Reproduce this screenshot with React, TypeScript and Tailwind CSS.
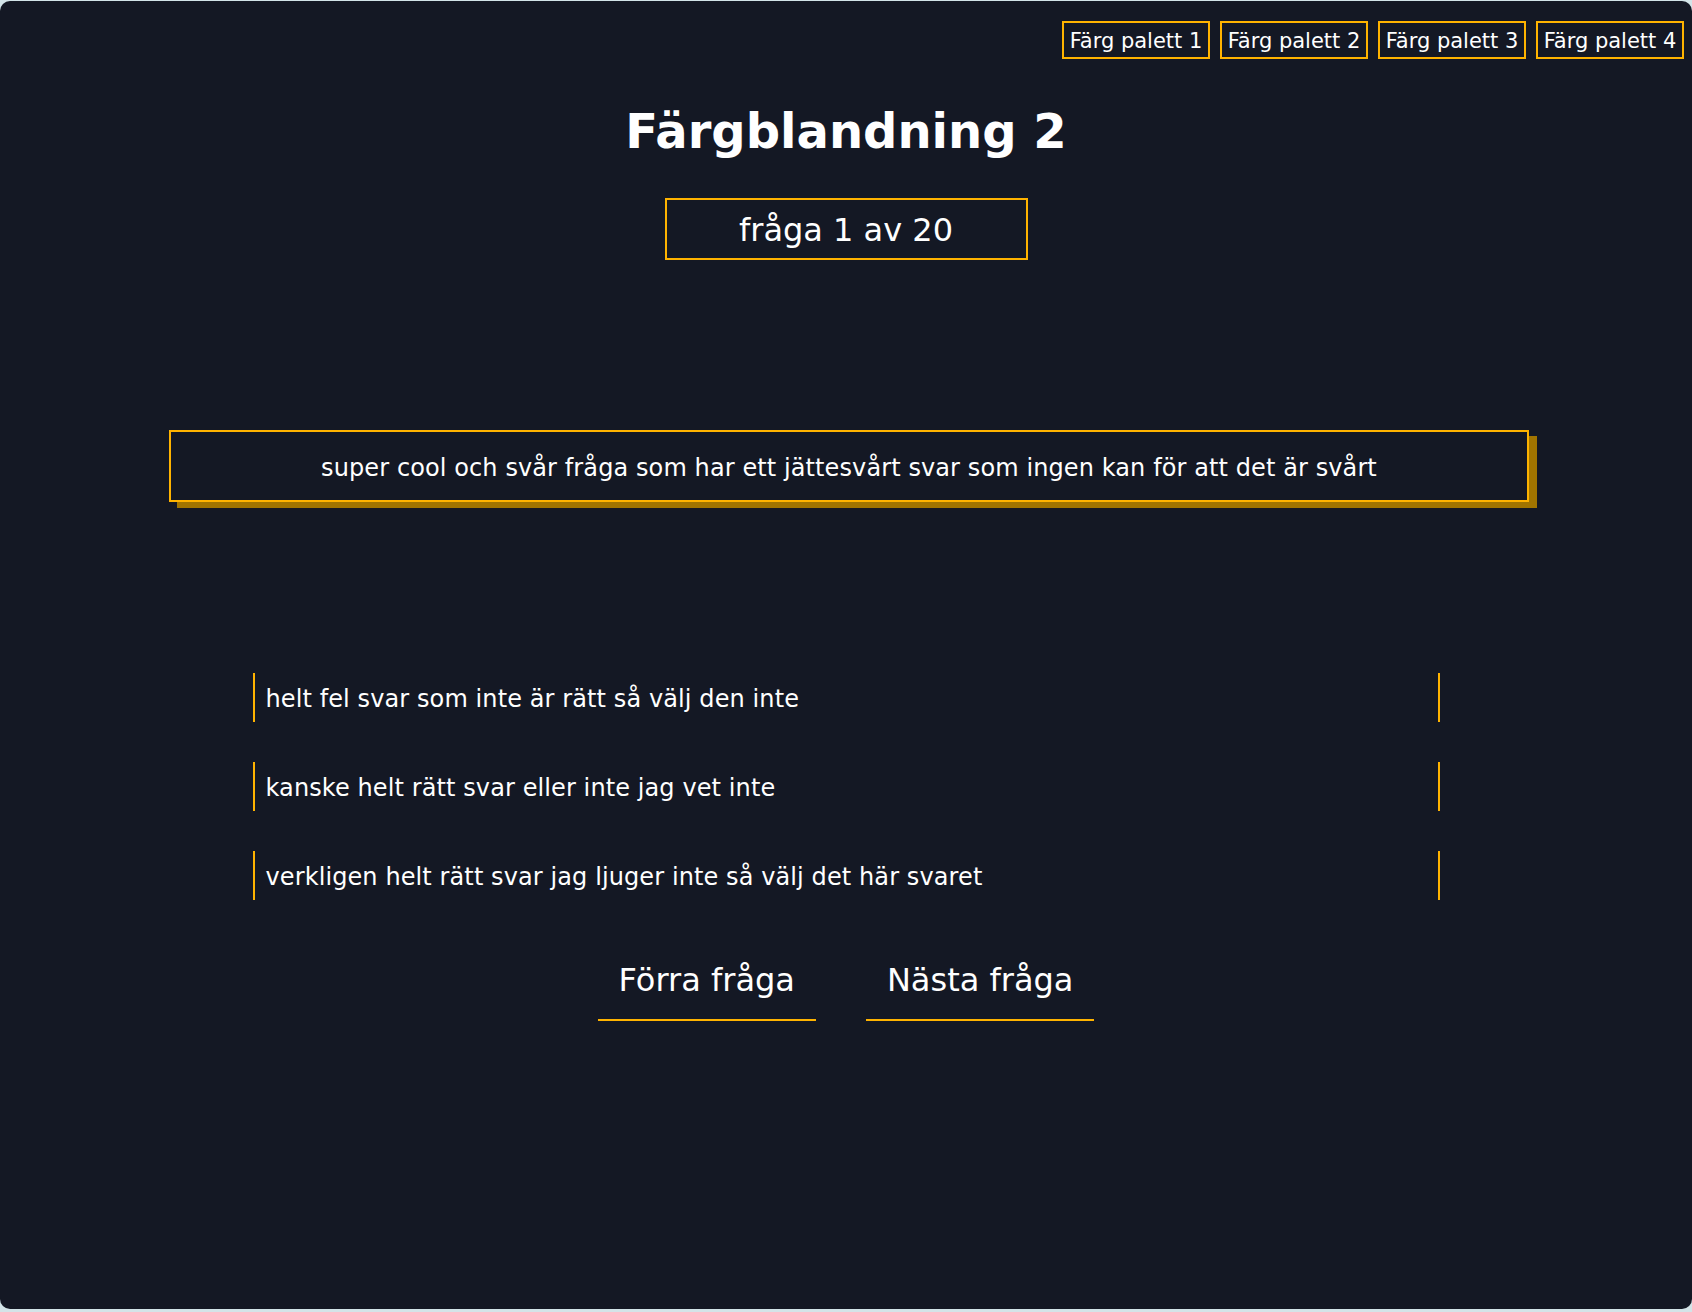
import { useState } from "react";

const palettes = ["Färg palett 1", "Färg palett 2", "Färg palett 3", "Färg palett 4"];

const answers = [
  "helt fel svar som inte är rätt så välj den inte",
  "kanske helt rätt svar eller inte jag vet inte",
  "verkligen helt rätt svar jag ljuger inte så välj det här svaret",
];

const App: React.FC = () => {
  const [palette, setPalette] = useState(0);
  const [selected, setSelected] = useState<number | null>(null);
  const [question, setQuestion] = useState(1);
  const total = 20;

  return (
    <div className="min-h-screen bg-[#d3e4e8] pt-px pb-[3px]">
      <div
        data-palette={palette}
        className="h-[1308px] rounded-[10px] bg-[#141824] text-white font-['DejaVu_Sans',sans-serif]"
      >
        {/* Palette picker */}
        <div className="flex justify-end gap-[10px] pt-5 pr-2">
          {palettes.map((name, i) => (
            <button
              key={name}
              onClick={() => setPalette(i)}
              className="h-[38px] w-[148px] flex items-center justify-center pt-[3px] border-2 border-[#ffb300] text-[21px] leading-none cursor-pointer"
            >
              {name}
            </button>
          ))}
        </div>

        <h1 className="mt-[44px] text-center text-[48px] leading-[56px] font-bold">Färgblandning 2</h1>

        <div className="mx-auto mt-[39px] w-[363px] h-[62px] flex items-center justify-center pt-[2px] border-2 border-[#ffb300] text-[32px]">
          fråga {question} av {total}
        </div>

        {/* Question */}
        <div className="ml-[169px] mt-[170px] w-[1360px] h-[72px] flex items-center justify-center pt-[3px] border-2 border-[#ffb300] shadow-[8px_6px_0_#a17400] text-[24px] tracking-[0.1px]">
          super cool och svår fråga som har ett jättesvårt svar som ingen kan för att det är svårt
        </div>

        {/* Answers */}
        <div className="mx-auto mt-[171px] w-[1187px] flex flex-col gap-10">
          {answers.map((answer, i) => (
            <button
              key={answer}
              onClick={() => setSelected(i)}
              className={`h-[49px] flex items-center pl-[11px] pt-[2px] border-x-2 border-[#ffb300] text-[24px] tracking-[0.1px] text-left cursor-pointer ${
                selected === i ? "bg-[#1c2130]" : ""
              }`}
            >
              {answer}
            </button>
          ))}
        </div>

        {/* Navigation */}
        <div className="mt-[42px] flex justify-center gap-[50px]">
          <button
            onClick={() => setQuestion((q) => Math.max(1, q - 1))}
            className="px-[21px] py-5 border-b-2 border-[#ffb300] text-[32px] leading-[37px] cursor-pointer"
          >
            Förra fråga
          </button>
          <button
            onClick={() => setQuestion((q) => Math.min(total, q + 1))}
            className="px-[21px] py-5 border-b-2 border-[#ffb300] text-[32px] leading-[37px] cursor-pointer"
          >
            Nästa fråga
          </button>
        </div>
      </div>
    </div>
  );
};

export default App;
